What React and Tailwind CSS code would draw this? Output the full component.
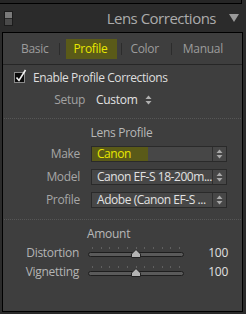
import React from 'react'

const font = { fontFamily: '"Open Sans", "Noto Sans", sans-serif' }

const Toggle = () => (
  <svg width="9" height="15" viewBox="0 0 9 15">
    <rect x="0.5" y="0.5" width="8" height="14" fill="#5a5a5a" stroke="#1c1c1c" />
    <rect x="1" y="1" width="7" height="6" fill="#7a7a7a" />
    <rect x="1" y="7" width="7" height="1" fill="#2a2a2a" />
    <rect x="1" y="8" width="7" height="6" fill="#4a4a4a" />
  </svg>
)

const Checkbox = () => (
  <svg width="14" height="14" viewBox="0 0 14 14" className="block">
    <rect x="0.5" y="3.5" width="10" height="10" fill="#0a0a0a" stroke="#8a8a8a" />
    <path d="M2.5 8.5 L5 11.5 L11.5 1" fill="none" stroke="#f2f2f2" strokeWidth="1.6" />
  </svg>
)

const Spinner = ({ color = '#a8a8a8' }) => (
  <svg width="7" height="10" viewBox="0 0 7 10">
    <path d="M3.5 0.5 L6.5 4 L0.5 4 Z" fill={color} />
    <path d="M3.5 9.5 L6.5 6 L0.5 6 Z" fill={color} />
  </svg>
)

const Slider = ({ pos = 48 }) => {
  const ticks = []
  for (let i = 0; i <= 10; i++) ticks.push(4 + i * 8.7)
  return (
    <svg width="97" height="14" viewBox="0 0 97 14" className="block">
      {ticks.map((t, i) => (
        <rect key={i} x={Math.round(t)} y="1" width="1" height="2" fill="#606060" />
      ))}
      <rect x="0.5" y="6.5" width="95" height="4" rx="2" fill="#5a5a5a" stroke="#1e1e1e" />
      <path
        d={`M${pos} 3.5 L${pos + 4.5} 8 L${pos + 4.5} 11.5 L${pos - 4.5} 11.5 L${pos - 4.5} 8 Z`}
        fill="#b4b4b4"
        stroke="#222"
        strokeWidth="1"
      />
    </svg>
  )
}

const Select = ({ children, highlight }) => (
  <div className="ml-[11px] w-[136px] h-[16px] flex border border-[#2a2a2a] bg-[#474747]">
    <div className="flex-1 flex items-center relative">
      {highlight && <div className="absolute left-0 top-0 bottom-0 w-[56px] bg-[#5a5a18]" />}
      <span
        className={`relative pl-[5px] text-[12px] tracking-[-0.45px] leading-[14px] whitespace-nowrap ${
          highlight ? 'text-[#e8e800]' : 'text-[#e2e2e2]'
        }`}
      >
        {children}
      </span>
    </div>
    <div className="w-[14px] border-l border-[#2e2e2e] flex items-center justify-center">
      <Spinner />
    </div>
  </div>
)

const Row = ({ label, children }) => (
  <div className="mt-[7px] h-[16px] flex items-center">
    <div className="w-[77px] text-right text-[12px] tracking-[-0.3px] text-[#a6a6a6]">{label}</div>
    {children}
  </div>
)

const SliderRow = ({ label, value }) => (
  <div className="mt-[1px] h-[18px] flex items-center">
    <div className="w-[76px] text-right text-[12px] tracking-[-0.3px] text-[#b4b4b4]">{label}</div>
    <div className="ml-[9px]">
      <Slider />
    </div>
    <div className="ml-auto mr-[14px] text-[12px] tracking-[-0.3px] text-[#e0e0e0]">{value}</div>
  </div>
)

export default function App() {
  return (
    <div className="w-[246px] h-[314px] bg-[#2b2b2b] overflow-hidden" style={font}>
      <div className="h-[4px] w-[242px] border-b border-r border-black bg-[#262626]" />
      <div className="h-[28px] flex items-center pl-[4px]">
        <Toggle />
        <span className="ml-auto text-[15px] tracking-[-0.5px] text-[#ababab] leading-none">Lens Corrections</span>
        <svg width="10" height="8" viewBox="0 0 10 8" className="ml-[13px] mr-[7px]">
          <path d="M0 0 L10 0 L5 8 Z" fill="#9a9a9a" />
        </svg>
      </div>
      <div className="ml-[2px] w-[241px] h-[280px] border border-black bg-[#3e3e3e] flex flex-col">
        <div className="h-[32px] border-b border-[#262626] flex items-center pl-[18px] text-[12px] tracking-[-0.3px] text-[#9c9c9c]">
          <span>Basic</span>
          <div className="ml-[11px] w-[1px] h-[12px] bg-[#2c2c2c]" />
          <div className="ml-[6px] w-[51px] h-[20px] bg-[#5a5a18] flex items-center pl-[7px] text-[#e8e800]">
            Profile
          </div>
          <div className="ml-[4px] w-[1px] h-[12px] bg-[#2c2c2c]" />
          <span className="ml-[8px]">Color</span>
          <div className="ml-[12px] w-[1px] h-[12px] bg-[#2c2c2c]" />
          <span className="ml-[11px]">Manual</span>
        </div>

        <div className="mt-[3px] h-[20px] flex items-center pl-[11px]">
          <div className="-mt-[4px]">
            <Checkbox />
          </div>
          <span className="ml-[5px] text-[12px] tracking-[-0.4px] text-[#dedede]">Enable Profile Corrections</span>
        </div>

        <div className="mt-[2px] h-[20px] flex items-center text-[12px] tracking-[-0.3px]">
          <div className="w-[82px] text-right text-[#a2a2a2]">Setup</div>
          <span className="ml-[11px] text-[#e2e2e2]">Custom</span>
          <span className="ml-[8px]">
            <Spinner color="#b0b0b0" />
          </span>
        </div>

        <div className="mt-[8px] mx-[1px] border-t border-dotted border-[#565656]" />

        <div className="mt-[5px] h-[18px] flex items-center justify-center text-[12px] tracking-[-0.3px] text-[#b8b8b8] pr-[2px]">
          Lens Profile
        </div>

        <div className="mt-[-3px]">
          <Row label="Make">
            <Select highlight>Canon</Select>
          </Row>
          <Row label="Model">
            <Select>Canon EF-S 18-200m...</Select>
          </Row>
          <Row label="Profile">
            <Select>Adobe (Canon EF-S ...</Select>
          </Row>
        </div>

        <div className="mt-[11px] mx-[1px] border-t border-dotted border-[#565656]" />

        <div className="mt-[5px] h-[18px] flex items-center text-[12px] tracking-[-0.3px] text-[#b8b8b8] pl-[84px]">
          Amount
        </div>
        <SliderRow label="Distortion" value="100" />
        <SliderRow label="Vignetting" value="100" />
      </div>
    </div>
  )
}
